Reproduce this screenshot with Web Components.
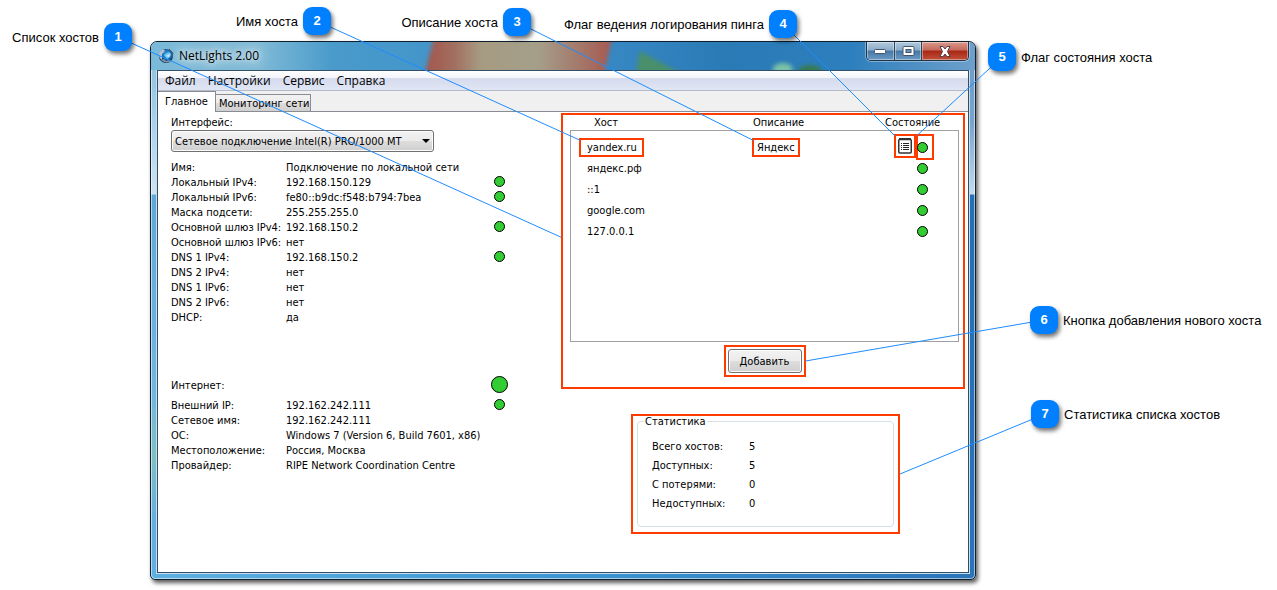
<!DOCTYPE html>
<html lang="ru">
<head>
<meta charset="utf-8">
<title>NetLights 2.00</title>
<style>
html, body { margin: 0; background: #fff; color: #000; }
body { font: 11px/15px "DejaVu Sans Condensed", "DejaVu Sans", sans-serif; }
</style>
</head>
<body>
<annotated-stage>
  <app-window heading="NetLights 2.00">
    <menu-bar></menu-bar>
    <tab-strip></tab-strip>
    <main-page></main-page>
  </app-window>
  <call-out slot="notes" n="1" at="left" style="--x:104px;--y:23px" before>Список хостов</call-out>
  <call-out slot="notes" n="2" at="corner" style="--x:303px;--y:7px" before>Имя хоста</call-out>
  <call-out slot="notes" n="3" at="corner" style="--x:503px;--y:8px" before>Описание хоста</call-out>
  <call-out slot="notes" n="4" at="corner" style="--x:769px;--y:10px" before>Флаг ведения логирования пинга</call-out>
  <call-out slot="notes" n="5" at="corner" style="--x:calc(100% - 289px);--y:43px">Флаг состояния хоста</call-out>
  <call-out slot="notes" n="6" at="right" style="--x:calc(100% - 247px);--y:306px">Кнопка добавления нового хоста</call-out>
  <call-out slot="notes" n="7" at="right" style="--x:calc(100% - 246px);--y:400px">Статистика списка хостов</call-out>
</annotated-stage>

<script>
const define = (name, html, extra = {}) => {
  const template = document.createElement('template');
  template.innerHTML = html;
  customElements.define(name, class extends HTMLElement {
    constructor() {
      super();
      this.attachShadow({ mode: 'open' }).append(template.content.cloneNode(true));
    }
    connectedCallback() { if (extra.connected) extra.connected(this, this.shadowRoot); }
  });
};

/* Looks through nested shadow roots for the first element that fits the selector. */
const deepFind = (root, selector) => {
  const hit = root.querySelector(selector);
  if (hit) return hit;
  for (const el of root.querySelectorAll('*')) {
    const inner = el.shadowRoot && deepFind(el.shadowRoot, selector);
    if (inner) return inner;
  }
  return null;
};

define('status-dot', `
<style>
  :host { display: block; box-sizing: border-box; width: 11px; height: 11px; border: 1px solid #000; border-radius: 50%; background: #32cd32; }
  :host([large]) { width: 17px; height: 17px; }
</style>`);

define('mark-frame', `
<style>
  :host { display: block; box-sizing: border-box; border: 2px solid #ff3c00; }
</style><slot></slot>`);

define('call-out', `
<style>
  :host { position: absolute; top: var(--y); left: var(--x); display: flex; align-items: flex-start; gap: 5px; z-index: 2;
    font: 13px/28px "Liberation Sans", Arial, sans-serif; white-space: nowrap; }
  :host([before]) { left: auto; right: calc(100% - var(--x) - 28px); flex-direction: row-reverse; }
  b { width: 28px; height: 28px; border-radius: 9px; background: #007fff; color: #fff; text-align: center;
    font-size: 13px; box-shadow: 2px 3px 4px rgba(0,0,0,.55); }
  span { padding-top: 1px; }
</style><b></b><span><slot></slot></span>`, {
  connected(host, root) { root.querySelector('b').textContent = host.getAttribute('n'); }
});

define('title-bar', `
<style>
  :host { display: flex; position: relative; height: 28px; }
  .smear { position: absolute; inset: 0; width: 100%; height: 100%; }
  h1 { position: relative; display: flex; align-items: center; gap: 5px; margin: 0; padding-left: 7px; flex: 1;
    font: 12px/28px "Open Sans", "Noto Sans", sans-serif; }
  h1 span { text-shadow: 0 0 6px rgba(255,255,255,.8), 0 0 12px #fff, 0 0 16px #fff; }
  .buttons { position: relative; display: flex; height: 18px; margin-right: 6px; border: 1px solid #1d3348; border-top: 0;
    border-radius: 0 0 5px 5px; overflow: hidden; box-shadow: 0 0 0 1px rgba(255,255,255,.35); }
  button { display: flex; align-items: center; justify-content: center; width: 27px; padding: 0; border: 0; border-right: 1px solid #294661;
    background: linear-gradient(#b3cadd, #8cabc8 45%, #4678a5 50%, #6c9ac4); box-shadow: inset 0 0 0 1px rgba(255,255,255,.4); }
  button:first-child { width: 28px; }
  button:last-child { width: 46px; border-right: 0; background: linear-gradient(#d99a8d, #c4695b 45%, #a82815 50%, #c0503a); }
</style>
<svg class="smear" viewBox="0 0 823 28" preserveAspectRatio="none" aria-hidden="true">
  <defs>
    <linearGradient id="sky"><stop offset="0" stop-color="#7ab9d8"/><stop offset=".13" stop-color="#80bad6"/><stop offset=".22" stop-color="#4a9bcb"/><stop offset=".5" stop-color="#3b8dc8"/><stop offset=".7" stop-color="#2a7ab6"/><stop offset=".85" stop-color="#2d7fbd"/><stop offset="1" stop-color="#6ea0cb"/></linearGradient>
    <linearGradient id="red"><stop offset="0" stop-color="#a3554c"/><stop offset=".16" stop-color="#a26f60"/><stop offset=".3" stop-color="#a69b82"/><stop offset=".6" stop-color="#a59f8a"/><stop offset=".85" stop-color="#a47467"/><stop offset="1" stop-color="#a9574e"/></linearGradient>
    <filter id="soft" x="-20%" y="-50%" width="140%" height="200%"><feGaussianBlur stdDeviation="2"/></filter>
  </defs>
  <rect width="823" height="28" fill="url(#sky)"/>
  <g filter="url(#soft)">
    <path d="M283-6L461-6L452 34L273 34Z" fill="url(#red)"/>
    <path d="M488 9L534 34L484 34Z" fill="#4a8f6a"/>
    <ellipse cx="631" cy="27" rx="10" ry="6" fill="#7cc3a4"/><ellipse cx="658" cy="29" rx="12" ry="6" fill="#397a50"/>
  </g>
</svg>
<h1>
  <svg width="16" height="16" viewBox="0 0 16 16" aria-hidden="true">
    <defs><radialGradient id="globe" cx=".55" cy=".4"><stop offset="0" stop-color="#4fb4ee"/><stop offset=".6" stop-color="#1b6fb8"/><stop offset="1" stop-color="#12324f"/></radialGradient></defs>
    <circle cx="8" cy="8" r="7" fill="url(#globe)"/>
    <path d="M1 6C2 2 5 1 7 2L6 4L4 6L4 9L4 12C2 11 1 9 1 6Z" fill="#b4c6d2"/><path d="M3 12C6 15 10 15 13 13L11 12L8 13L6 11Z" fill="#7d94a5"/>
    <path d="M6 7L11 4L13 6L12 9L9 11Z" fill="#6cc6f3"/><path d="M8 8L12 6L11 9Z" fill="#d5f2fd"/><path d="M11 1L15 5L14 9" fill="none" stroke="#39536a"/>
  </svg>
  <span></span>
</h1>
<div class="buttons">
  <button aria-label="Свернуть"><svg width="13" height="6" viewBox="0 0 13 6"><rect x=".5" y="1.5" width="11" height="4" rx="1" fill="#fff" stroke="#43536b"/></svg></button>
  <button aria-label="Развернуть"><svg width="13" height="11" viewBox="0 0 13 11"><rect x="1" y=".5" width="11" height="9" rx="1" fill="#fff" stroke="#43536b"/><rect x="4" y="3.5" width="5" height="3" fill="#6b93ba" stroke="#43536b"/></svg></button>
  <button aria-label="Закрыть"><svg width="14" height="11" viewBox="0 0 14 11"><path d="M2 .5H5L7 3L9 .5H12L9.500 5.500L12 10.500H9L7 8L5 10.500H2L4.500 5.500Z" fill="#fff" stroke="#52404c"/></svg></button>
</div>`, {
  connected(host, root) { root.querySelector('span').textContent = host.getAttribute('text'); }
});

define('app-window', `
<style>
  :host { display: block; }
  .frame { border: 1px solid #10202e; border-radius: 7px 7px 5px 5px; overflow: hidden; background:
      linear-gradient(90deg, #5eb0e0, #3d96d2 50%, #2a74b8) bottom / 100% 7px no-repeat,
      linear-gradient(#87bcda, #a9d1ea 80px, #cfe4f2 152px, #5ea9d8 153px, #70b6e0 350px, #7fc0c0 415px, #62aee0 480px) left / 50% 100% no-repeat,
      linear-gradient(#6a9bc8, #78a3cb 80px, #c4dbec 152px, #2470b5 153px, #2a74b8) right / 50% 100% no-repeat; }
  .shade { border-radius: 7px 7px 5px 5px; box-shadow: 2px 3px 4px rgba(0,0,0,.65); }
  .glass { border: 1px solid rgba(255,255,255,.55); border-radius: 6px 6px 4px 4px; }
  .client { margin: 0 4px 4px; border: 1px solid #c8deee; border-top: 0; }
  .inner { border: 1px solid #324f69; background: #fff; }
  title-bar { margin: -1px -1px 0; }
</style>
<div class="shade"><div class="frame"><div class="glass">
  <title-bar></title-bar>
  <div class="client"><div class="inner"><slot></slot></div></div>
</div></div></div>`, {
  connected(host, root) {
    const bar = root.querySelector('title-bar');
    bar.setAttribute('text', host.getAttribute('heading'));
    bar.shadowRoot.querySelector('span').textContent = host.getAttribute('heading');
  }
});

define('menu-bar', `
<style>
  :host { display: block; border-bottom: 1px solid #b5bac8; background: linear-gradient(#fff, #f3f5fb 35%, #d5dbed 40%, #e1e6f5); }
  nav { display: flex; padding-left: 1px; }
  a { padding: 0 6px; font: 12px/19px "Open Sans", "Noto Sans", sans-serif; color: #000; text-decoration: none; }
</style>
<nav><a href="#file">Файл</a><a href="#settings">Настройки</a><a href="#service">Сервис</a><a href="#help">Справка</a></nav>`);

define('tab-strip', `
<style>
  :host { display: flex; align-items: flex-end; height: 21px; background: linear-gradient(#898c95, #898c95) bottom / 100% 1px no-repeat #f0f0f0; }
  button { box-sizing: border-box; font: inherit; color: #000; padding: 0 1px 0 3px; height: 18px; line-height: 17px; border: 1px solid #898c95; border-left: 0;
    background: linear-gradient(#f2f2f2, #ebebeb 50%, #dcdcdc 51%, #d0d0d0); }
  button[aria-selected=true] { height: 21px; line-height: 18px; padding: 0 7px; border-bottom: 0; background: #fff; }
</style>
<button role="tab" aria-selected="true">Главное</button><button role="tab" aria-selected="false">Мониторинг сети</button>`);

define('info-row', `
<style>
  :host { display: grid; grid-template-columns: 115px 1fr 17px; align-items: center; height: 15px; white-space: nowrap; }
  :host([large]) { height: 20px; margin-bottom: 3px; }
  status-dot { justify-self: center; margin-bottom: 2px; }
  status-dot[hidden] { display: none; }
</style><span class="name"></span><span><slot></slot></span><status-dot></status-dot>`, {
  connected(host, root) {
    root.querySelector('.name').textContent = host.getAttribute('name');
    const dot = root.querySelector('status-dot');
    dot.hidden = !host.hasAttribute('ok');
    dot.toggleAttribute('large', host.hasAttribute('large'));
  }
});

define('network-panel', `
<style>
  :host { display: block; padding: 2px 53px 0 13px; }
  label { display: block; }
  .combo { position: relative; max-width: 263px; margin-bottom: 8px; }
  .combo::after { content: ""; position: absolute; right: 4px; top: 9px; border: 4px solid transparent; border-top-color: #000; border-bottom: 0; pointer-events: none; }
  select { appearance: none; display: block; box-sizing: border-box; width: 100%; height: 22px; padding: 0 3px; border: 1px solid #707070; border-radius: 3px;
    background: linear-gradient(#f2f2f2, #ebebeb 50%, #dddddd 51%, #cfcfcf); box-shadow: inset 0 0 0 1px #fcfcfc; font: inherit; color: #000; }
  section + section { margin-top: 50px; }
</style>
<label for="nic">Интерфейс:</label>
<div class="combo"><select id="nic"><option>Сетевое подключение Intel(R) PRO/1000 MT</option></select></div>
<section>
  <info-row name="Имя:">Подключение по локальной сети</info-row>
  <info-row name="Локальный IPv4:" ok>192.168.150.129</info-row>
  <info-row name="Локальный IPv6:" ok>fe80::b9dc:f548:b794:7bea</info-row>
  <info-row name="Маска подсети:">255.255.255.0</info-row>
  <info-row name="Основной шлюз IPv4:" ok>192.168.150.2</info-row>
  <info-row name="Основной шлюз IPv6:">нет</info-row>
  <info-row name="DNS 1 IPv4:" ok>192.168.150.2</info-row>
  <info-row name="DNS 2 IPv4:">нет</info-row>
  <info-row name="DNS 1 IPv6:">нет</info-row>
  <info-row name="DNS 2 IPv6:">нет</info-row>
  <info-row name="DHCP:">да</info-row>
</section>
<section>
  <info-row name="Интернет:" ok large></info-row>
  <info-row name="Внешний IP:" ok>192.162.242.111</info-row>
  <info-row name="Сетевое имя:">192.162.242.111</info-row>
  <info-row name="ОС:">Windows 7 (Version 6, Build 7601, x86)</info-row>
  <info-row name="Местоположение:">Россия, Москва</info-row>
  <info-row name="Провайдер:">RIPE Network Coordination Centre</info-row>
</section>`);

define('host-list', `
<style>
  :host { display: block; }
  .body { padding: 0 4px 10px 7px; }
  table { width: 100%; border-spacing: 0; table-layout: fixed; }
  th, td { padding: 0; text-align: left; font-weight: normal; white-space: nowrap; line-height: 15px; }
  th:nth-child(1) { width: 159px; padding-left: 24px; }
  th:nth-child(3) { width: 74px; }
  tbody { outline: 1px solid #a0a0a0; outline-offset: -1px; }
  tbody::before, tbody::after { content: ""; display: table-row; height: 7px; }
  tbody::after { height: 100px; }
  tbody tr { height: 21px; }
  td:nth-child(1) { padding-left: 17px; }
  td:nth-child(2) { padding-left: 4px; }
  td mark-frame { display: inline-block; vertical-align: middle; margin: -2px -8px; padding: 0 5px 0 6px; }
  td:nth-child(2) mark-frame { margin: -2px -5px; padding: 0 3px; }
  .state { display: flex; align-items: center; justify-content: flex-end; padding-right: 31px; height: 21px; }
  .state mark-frame[n="4"] { padding: 2px; margin: 0 0 3px; }
  .state mark-frame[n="5"] { padding: 6px 4px 5px 0; margin: 0 -6px 2px 0; }
  .state mark-frame[n="5"] status-dot { margin-left: -1px; }
  .state svg { display: block; }
  .add { width: 82px; margin: 3px auto 0; padding: 2px; }
  .add button { display: block; width: 100%; height: 24px; padding: 0; border: 1px solid #707070; border-radius: 3px; font: inherit; color: #000;
    background: linear-gradient(#f2f2f2, #ebebeb 50%, #dddddd 51%, #cfcfcf); box-shadow: inset 0 0 0 1px #fcfcfc; }
</style>
<mark-frame n="1"><div class="body">
  <table>
    <thead><tr><th>Хост</th><th>Описание</th><th>Состояние</th></tr></thead>
    <tbody>
      <tr><td><mark-frame n="2">yandex.ru</mark-frame></td><td><mark-frame n="3">Яндекс</mark-frame></td><td><div class="state">
        <mark-frame n="4"><svg width="14" height="16" viewBox="0 0 14 16" aria-label="Логирование"><rect x=".75" y="1.500" width="12.500" height="13.500" rx="1" fill="#fff" stroke="#333" stroke-width="1.500"/><path d="M1 1H13" stroke="#333" stroke-width="2"/><path d="M3 5.500H4M3 7.500H4M3 9.500H4M3 11.500H4M5 5.500H11M5 7.500H11M5 9.500H11M5 11.500H11" stroke="#222"/></svg></mark-frame>
        <mark-frame n="5"><status-dot></status-dot></mark-frame></div></td></tr>
      <tr><td>яндекс.рф</td><td></td><td><div class="state"><status-dot></status-dot></div></td></tr>
      <tr><td>::1</td><td></td><td><div class="state"><status-dot></status-dot></div></td></tr>
      <tr><td>google.com</td><td></td><td><div class="state"><status-dot></status-dot></div></td></tr>
      <tr><td>127.0.0.1</td><td></td><td><div class="state"><status-dot></status-dot></div></td></tr>
    </tbody>
  </table>
  <mark-frame n="6" class="add"><button>Добавить</button></mark-frame>
</div></mark-frame>`);

define('stats-panel', `
<style>
  :host { display: block; }
  fieldset { margin: 0 4px 5px; padding: 10px 14px 13px; border: 1px solid #d5dfe5; border-radius: 4px; }
  legend { margin-left: -8px; padding: 0 1px; line-height: 11px; }
  dl { display: grid; grid-template-columns: 97px 1fr; margin: 0; line-height: 19px; }
  dd { margin: 0; }
</style>
<mark-frame n="7"><fieldset><legend>Статистика</legend>
  <dl><dt>Всего хостов:</dt><dd>5</dd><dt>Доступных:</dt><dd>5</dd><dt>С потерями:</dt><dd>0</dd><dt>Недоступных:</dt><dd>0</dd></dl>
</fieldset></mark-frame>`);

define('main-page', `
<style>
  :host { display: grid; grid-template-columns: 1fr 404px; padding: 1px 3px 38px 0; }
  stats-panel { margin: 25px 65px 0 70px; }
</style>
<network-panel></network-panel>
<div><host-list></host-list><stats-panel></stats-panel></div>`);

define('annotated-stage', `
<style>
  :host { display: block; position: relative; min-width: 1180px; padding: 41px 301px 9px 150px; box-sizing: border-box; }
  svg { position: absolute; inset: 0; width: 100%; height: 100%; z-index: 1; pointer-events: none; }
  line { stroke: #1e8cff; stroke-width: 1; }
</style>
<slot></slot><svg aria-hidden="true"></svg><slot name="notes"></slot>`, {
  connected(host, root) {
    const svg = root.querySelector('svg');
    /* Joins each numbered badge to the frame that bears the same number. */
    const draw = () => {
      const base = host.getBoundingClientRect();
      svg.replaceChildren();
      for (const note of host.querySelectorAll('call-out')) {
        const frame = deepFind(host, `mark-frame[n="${note.getAttribute('n')}"]`);
        if (!frame) continue;
        const b = note.shadowRoot.querySelector('b').getBoundingClientRect();
        const f = frame.getBoundingClientRect();
        const at = note.getAttribute('at');
        const end = at === 'corner' ? [f.left + 1, f.top + 2] : at === 'left' ? [f.left, f.top + f.height * .45] : [f.right, f.top + f.height * .5];
        const line = document.createElementNS('http://www.w3.org/2000/svg', 'line');
        line.setAttribute('x1', b.left + 14 - base.left); line.setAttribute('y1', b.top + 14 - base.top);
        line.setAttribute('x2', end[0] - base.left); line.setAttribute('y2', end[1] - base.top);
        svg.append(line);
      }
    };
    draw();
    document.fonts.ready.then(draw);
    new ResizeObserver(draw).observe(host);
  }
});
</script>
</body>
</html>
